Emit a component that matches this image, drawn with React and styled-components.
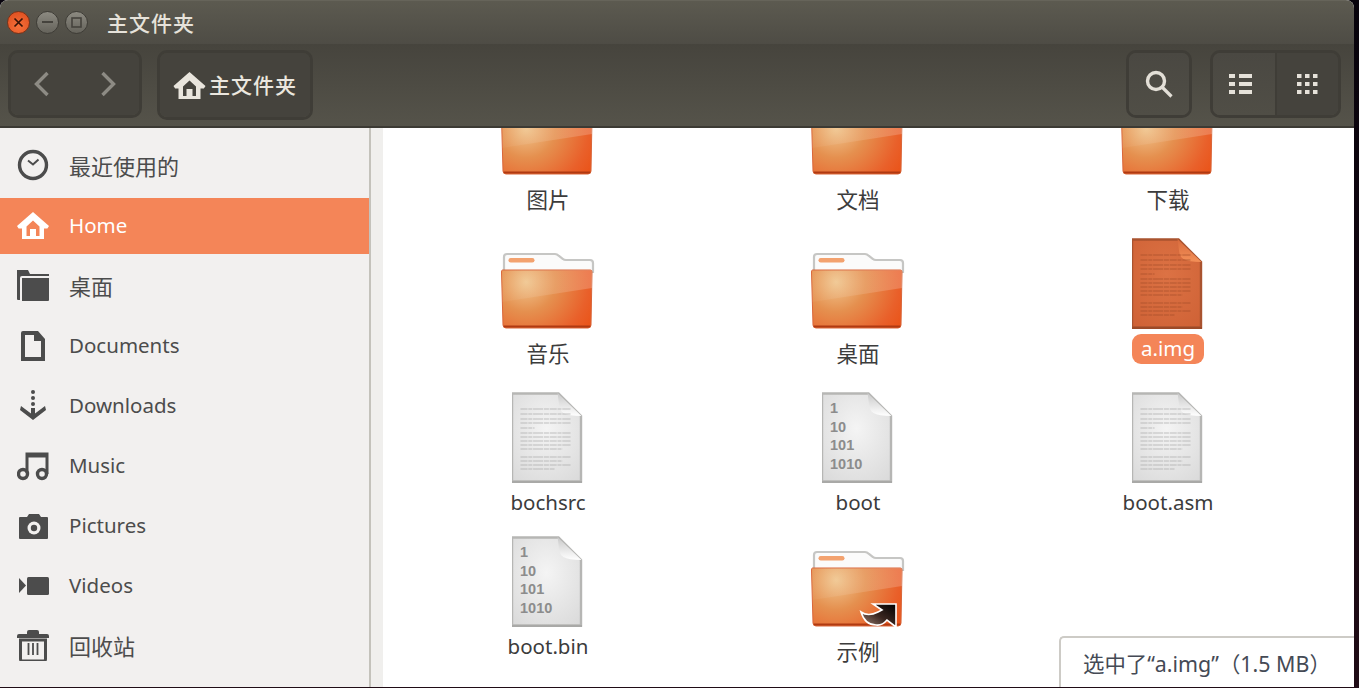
import React from 'react';
import styled, { createGlobalStyle } from 'styled-components';

const GlobalStyle = createGlobalStyle`
  html, body {
    margin: 0;
    padding: 0;
    height: 100%;
    overflow: hidden;
    background: #14060f;
    font-family: "Noto Sans", "Noto Sans CJK SC", sans-serif;
  }
`;

const Screen = styled.div`
  width: 1359px;
  height: 688px;
  background: linear-gradient(180deg, #07030c 0%, #200c16 100%);
  padding: 0 5px 1px 0;
  box-sizing: border-box;
`;

const Window = styled.div`
  height: 100%;
  display: flex;
  flex-direction: column;
  border-radius: 8px 8px 0 0;
  overflow: hidden;
  background: #fff;
`;

const TitleBar = styled.header`
  height: 44px;
  flex: none;
  display: flex;
  align-items: center;
  padding-left: 7px;
  box-sizing: border-box;
  background: linear-gradient(180deg, #5c5a50 0%, #4e4c45 100%);
  border-top: 1px solid #66645a;
`;

const WinButton = styled.div`
  width: 23px;
  height: 23px;
  margin-right: 6px;
  border-radius: 50%;
  display: flex;
  align-items: center;
  justify-content: center;
  box-sizing: border-box;
  border: 1px solid ${p => (p.$close ? '#7a3218' : '#3e3c36')};
  background: ${p =>
    p.$close
      ? 'radial-gradient(circle at 50% 70%, #f7703a, #dc4b1c)'
      : 'linear-gradient(180deg, #8c8a81, #65635b)'};
`;

const WindowTitle = styled.div`
  margin: -1px 0 0 13px;
  font-size: 21px;
  font-weight: 500;
  letter-spacing: 1px;
  color: #e6e2da;
`;

const ToolBar = styled.div`
  height: 84px;
  flex: none;
  display: flex;
  align-items: flex-start;
  padding: 6px 13px 0 8px;
  box-sizing: border-box;
  background: linear-gradient(180deg, #46443d 0%, #55534a 100%);
  border-bottom: 2px solid #3c3a34;
`;

const ToolGroup = styled.div`
  display: flex;
  height: ${p => p.$h || 68}px;
  box-sizing: border-box;
  margin-left: ${p => p.$ml || 0}px;
  border: 3px solid #3f3d37;
  border-radius: 10px;
  overflow: hidden;
`;

const ToolButton = styled.div`
  width: ${p => p.$w}px;
  height: 100%;
  display: flex;
  align-items: center;
  justify-content: center;
  gap: 3px;
  padding-right: ${p => p.$pr || 0}px;
  box-sizing: border-box;
  background: ${p => (p.$dark ? '#45433d' : 'linear-gradient(180deg, #4a4842, #504e46)')};
  border-left: ${p => (p.$divider ? '2px solid #3f3d37' : 'none')};
`;

const Spacer = styled.div`
  flex: 1;
`;

const PathLabel = styled.span`
  margin-top: -2px;
  font-size: 21px;
  font-weight: 500;
  letter-spacing: 1px;
  color: #ebe7df;
`;

const Body = styled.div`
  flex: 1;
  min-height: 0;
  display: flex;
`;

const Sidebar = styled.nav`
  width: 369px;
  flex: none;
  padding-top: 8px;
  box-sizing: border-box;
  background: #f2f0ef;
`;

const SideRow = styled.div`
  height: 60px;
  display: flex;
  align-items: center;
  padding: 0 0 2px 17px;
  box-sizing: border-box;
  font-size: ${p => (p.$cjk ? 22 : 20.5)}px;
  color: ${p => (p.$active ? '#ffffff' : '#4c4c4c')};
  border-top: 2px solid transparent;
  border-bottom: 2px solid transparent;
  background-clip: padding-box;
  background-color: ${p => (p.$active ? '#f48558' : 'transparent')};
`;

const SideIcon = styled.svg`
  width: 32px;
  height: 32px;
  margin-right: 20px;
  flex: none;
`;

const Gutter = styled.div`
  width: 14px;
  flex: none;
  box-sizing: border-box;
  background: #f0efed;
  border-left: 2px solid #c4c2bb;
`;

const Content = styled.main`
  flex: 1;
  min-width: 0;
  position: relative;
  overflow: hidden;
  background: #fff;
`;

const IconGrid = styled.div`
  display: grid;
  grid-template-columns: repeat(3, 310px);
  grid-auto-rows: min-content;
  margin: -44px 0 0 10px;
`;

const Cell = styled.div`
  height: ${p => p.$h}px;
  display: flex;
  flex-direction: column;
  align-items: center;
`;

const FileLabel = styled.div`
  margin-top: ${p => p.$mt}px;
  height: 30px;
  line-height: 29px;
  padding: 0 9px;
  font-size: ${p => (p.$cjk ? 21.5 : 20.5)}px;
  border-radius: 9px;
  color: ${p => (p.$selected ? '#fff' : '#3c3c3c')};
  background: ${p => (p.$selected ? '#f48558' : 'transparent')};
`;

const StatusBubble = styled.div`
  position: absolute;
  right: 0;
  bottom: 0;
  width: 295px;
  height: 51px;
  box-sizing: border-box;
  padding-left: 22px;
  display: flex;
  align-items: center;
  background: #fff;
  border: 2px solid #cdcbc6;
  border-width: 2px 0 0 2px;
  border-radius: 5px 0 0 0;
  font-size: 21.4px;
  text-spacing-trim: space-all;
  color: #454a55;
  white-space: nowrap;
`;

const FolderIcon = ({ link }) => (
  <svg width="95" height="96" viewBox="1 0 95 96">
    <defs>
      <radialGradient id="folderFill" gradientUnits="userSpaceOnUse" cx="26" cy="44" r="78">
        <stop offset="0" stopColor="#f0c68f" />
        <stop offset="0.38" stopColor="#e5904f" />
        <stop offset="0.8" stopColor="#e9602a" />
        <stop offset="1" stopColor="#ea5318" />
      </radialGradient>
      <linearGradient id="folderGloss" x1="0" y1="0" x2="1" y2="0">
        <stop offset="0" stopColor="#fff" stopOpacity="0.03" />
        <stop offset="1" stopColor="#fff" stopOpacity="0.2" />
      </linearGradient>
      <linearGradient id="arrowFill" x1="0" y1="1" x2="1" y2="0">
        <stop offset="0" stopColor="#a08578" />
        <stop offset="0.5" stopColor="#3a2620" />
        <stop offset="1" stopColor="#000" />
      </linearGradient>
    </defs>
    <path d="M4 34V19q0-3 3-3h48q2 0 4 2l4 3q1 1 3 1h24q3 0 3 3v9z" fill="#fbfbfb" stroke="#c6c6c4" strokeWidth="2.2" />
    <rect x="8.5" y="20" width="26" height="4.5" rx="2.2" fill="#f3a26f" />
    <path d="M2.5 32h88q1.5 0 1.5 2l-1 53q0 3-3 3H6q-3 0-3-3L1.5 34q0-2 1-2z" fill="url(#folderFill)" stroke="#d9663a" strokeWidth="1" />
    <path d="M2 64L92 50V34q0-2-1.5-2H2.5q-1 0-1 2z" fill="url(#folderGloss)" />
    <path d="M3.5 87.500q0 2 3 2h81q3 0 3-2z" fill="#b03a12" />
    {link && (
      <path
        d="M63 68H86V91L77 84Q72 90 66 89Q55 89 51 76Q58 81 68 76L72 74Z"
        fill="url(#arrowFill)"
        stroke="#fff"
        strokeWidth="1.6"
      />
    )}
  </svg>
);

// y offset of each tiny text line on a document icon
const textRows = [
  [17, 50], [22, 50], [27, 50], [31, 50], [36, 14],
  [41, 50], [45, 50], [49, 50], [53, 50], [57, 42],
  [65, 50], [69, 42], [73, 50], [77, 34],
];

const PageIcon = ({ tint, binary }) => {
  const edge = tint ? '#a9532f' : '#b6b6b4';
  const line = tint ? '#a64f2a' : '#a9a9a9';
  const id = tint ? 'pageTint' : 'pagePlain';
  return (
    <svg width="72" height="92" viewBox="1.5 0 72 92">
      <defs>
        <radialGradient id={id} cx="0.5" cy="0.4" r="0.75">
          <stop offset="0" stopColor={tint ? '#dc7244' : '#f4f4f4'} />
          <stop offset="1" stopColor={tint ? '#cf6236' : '#dadada'} />
        </radialGradient>
        <linearGradient id={`${id}Fold`} x1="0" y1="0" x2="0" y2="1">
          <stop offset="0" stopColor={tint ? '#d86a3c' : '#c9c9c9'} />
          <stop offset="1" stopColor={tint ? '#f39058' : '#ffffff'} />
        </linearGradient>
      </defs>
      <path d="M1.5 1.5H48L70.5 24V89.5H1.5z" fill={`url(#${id})`} stroke={edge} strokeWidth="2.4" />
      <path d="M47 1c2 12 1 17 6 20q5 3 18 3z" fill={`url(#${id}Fold)`} />
      <rect x="0.5" y="89" width="71" height="2" fill={tint ? '#9c4a28' : '#a9a9a7'} />
      {!binary && textRows.map(([y, w]) => (
        <path key={y} d={`M10 ${y}h${w}`} stroke={line} strokeWidth="1.2" strokeDasharray="7 0.8 4 0.8 10 0.8 5 0.8" opacity="0.7" />
      ))}
      {binary &&
        ['1', '10', '101', '1010'].map((t, i) => (
          <text key={t} x="9.5" y={21 + i * 18.5} fontFamily="Liberation Sans" fontSize="14.5" fontWeight="700" fill="#8c8c8c">
            {t}
          </text>
        ))}
    </svg>
  );
};

const items = [
  { name: '图片', kind: 'folder' },
  { name: '文档', kind: 'folder' },
  { name: '下载', kind: 'folder' },
  { name: '音乐', kind: 'folder' },
  { name: '桌面', kind: 'folder' },
  { name: 'a.img', kind: 'page', selected: true },
  { name: 'bochsrc', kind: 'page' },
  { name: 'boot', kind: 'binary' },
  { name: 'boot.asm', kind: 'page' },
  { name: 'boot.bin', kind: 'binary' },
  { name: '示例', kind: 'link' },
];

const isCjk = text => /[\u4e00-\u9fff]/.test(text);

const HomeShape = ({ color, hole }) => (
  <g>
    <path d="M16 3L0 17l1.6 2.5H5V30h22V19.5h3.4L32 17z" fill={color} />
    <path d="M9.5 17.5L16 11.5l6.5 6V27h-3.5v-7h-6v7H9.5z" fill={hole} />
  </g>
);

const sideItems = [
  {
    label: '最近使用的',
    icon: (
      <g fill="none" stroke="#4c4c4c">
        <circle cx="16" cy="16" r="13.5" strokeWidth="3.4" />
        <path d="M11 11.5l5 4 5.5-5" strokeWidth="2" />
      </g>
    ),
  },
  { label: 'Home', active: true, icon: <HomeShape color="#fff" hole="#f48558" /> },
  {
    label: '桌面',
    icon: (
      <g fill="#4c4c4c">
        <path d="M0 1h11l2 4h19v2H5q-2 0-2 2v22H1q-1 0-1-1z" />
        <path d="M5 9h27v22q0 1-1 1H5z" />
      </g>
    ),
  },
  {
    label: 'Documents',
    icon: <path d="M6 2h15l7 8v22H4V4q0-2 2-2zM8 6v22h16V12h-7V6z" fill="#4c4c4c" fillRule="evenodd" />,
  },
  {
    label: 'Downloads',
    icon: (
      <g fill="#4c4c4c">
        <circle cx="16" cy="3" r="2" />
        <circle cx="16" cy="9" r="2" />
        <circle cx="16" cy="15" r="2" />
        <path d="M4 17l12 9 12-9 1 4-13 10L3 21z" />
        <rect x="14" y="19" width="4" height="7" />
      </g>
    ),
  },
  {
    label: 'Music',
    icon: (
      <g fill="none" stroke="#4c4c4c">
        <circle cx="6" cy="25" r="4.5" strokeWidth="3.4" />
        <circle cx="25" cy="25" r="4.5" strokeWidth="3.4" />
        <path d="M10 24V5h20v20" strokeWidth="3" />
        <path d="M10 7h20" strokeWidth="3" />
      </g>
    ),
  },
  {
    label: 'Pictures',
    icon: (
      <g>
        <path d="M3 8h7l2-3h10l2 3h6q1 0 1 1v20q0 1-1 1H3q-1 0-1-1V9q0-1 1-1z" fill="#4c4c4c" />
        <circle cx="17" cy="19" r="6.5" fill="#f2f0ef" />
        <circle cx="17" cy="19" r="3.2" fill="#4c4c4c" />
      </g>
    ),
  },
  {
    label: 'Videos',
    icon: (
      <g fill="#4c4c4c">
        <path d="M2 9l7 7.5-7 7.5z" />
        <rect x="10" y="8" width="22" height="18" rx="1.5" />
      </g>
    ),
  },
  {
    label: '回收站',
    icon: (
      <g>
        <path d="M0 7q0-2 2-2h8V3q0-2 2-2h8q2 0 2 2v2h8q2 0 2 2v2H0z" fill="#4c4c4c" />
        <path d="M3.5 11h25v19q0 2-2 2h-21q-2 0-2-2z" fill="none" stroke="#4c4c4c" strokeWidth="3" />
        <path d="M11.5 14v12M16 14v12M20.5 14v12" stroke="#4c4c4c" strokeWidth="1.8" />
      </g>
    ),
  },
];

export default function App() {
  return (
    <Screen>
      <GlobalStyle />
      <Window>
        <TitleBar>
          <WinButton $close>
            <svg width="11" height="11" viewBox="0 0 11 11">
              <path d="M1.5 1.5l8 8M9.5 1.5l-8 8" stroke="#3a1408" strokeWidth="1.7" />
            </svg>
          </WinButton>
          <WinButton>
            <svg width="11" height="3" viewBox="0 0 11 3">
              <rect width="11" height="2" fill="#45433d" />
            </svg>
          </WinButton>
          <WinButton>
            <svg width="11" height="11" viewBox="0 0 11 11">
              <rect x="1" y="1" width="9" height="9" fill="none" stroke="#45433d" strokeWidth="1.6" />
            </svg>
          </WinButton>
          <WindowTitle>主文件夹</WindowTitle>
        </TitleBar>

        <ToolBar>
          <ToolGroup>
            <ToolButton $w={64} $dark>
              <svg width="18" height="26" viewBox="0 0 18 26">
                <path d="M13.5 2L2.5 13l11 11" fill="none" stroke="#8d8b84" strokeWidth="3.4" />
              </svg>
            </ToolButton>
            <ToolButton $w={64} $dark>
              <svg width="18" height="26" viewBox="0 0 18 26">
                <path d="M4.5 2l11 11-11 11" fill="none" stroke="#8d8b84" strokeWidth="3.4" />
              </svg>
            </ToolButton>
          </ToolGroup>
          <ToolGroup $ml={15} $h={70}>
            <ToolButton $w={150} $dark>
              <svg width="33" height="32" viewBox="0 0 32 32">
                <HomeShape color="#e9e5dd" hole="#45433d" />
              </svg>
              <PathLabel>主文件夹</PathLabel>
            </ToolButton>
          </ToolGroup>
          <Spacer />
          <ToolGroup>
            <ToolButton $w={60}>
              <svg width="30" height="30" viewBox="0 0 30 30">
                <circle cx="12" cy="12" r="8.5" fill="none" stroke="#e3dfd7" strokeWidth="3.4" />
                <path d="M18 18l9.5 9.5" stroke="#e3dfd7" strokeWidth="3.2" />
              </svg>
            </ToolButton>
          </ToolGroup>
          <ToolGroup $ml={18}>
            <ToolButton $w={62} $pr={7}>
              <svg width="23" height="20" viewBox="0 0 23 20" fill="#e6e2da">
                <rect y="0" width="6" height="4" />
                <rect x="10" y="0" width="13" height="4" />
                <rect y="8" width="6" height="4" />
                <rect x="10" y="8" width="13" height="4" />
                <rect y="16" width="6" height="4" />
                <rect x="10" y="16" width="13" height="4" />
              </svg>
            </ToolButton>
            <ToolButton $w={63} $dark $divider>
              <svg width="21" height="20" viewBox="0 0 21 20" fill="#e6e2da">
                {[0, 8, 16].flatMap(y =>
                  [0, 8, 16].map(x => <rect key={`${x}-${y}`} x={x} y={y} width="4.5" height="4" />)
                )}
              </svg>
            </ToolButton>
          </ToolGroup>
        </ToolBar>

        <Body>
          <Sidebar>
            {sideItems.map(item => (
              <SideRow key={item.label} $active={item.active} $cjk={isCjk(item.label)}>
                <SideIcon viewBox="0 0 32 32">{item.icon}</SideIcon>
                {item.label}
              </SideRow>
            ))}
          </Sidebar>
          <Gutter />
          <Content>
            <IconGrid>
              {items.map(item => {
                const isFolder = item.kind === 'folder' || item.kind === 'link';
                return (
                  <Cell key={item.name} $h={isFolder || item.selected ? 154 : 144}>
                    {isFolder ? (
                      <FolderIcon link={item.kind === 'link'} />
                    ) : (
                      <PageIcon tint={item.selected} binary={item.kind === 'binary'} />
                    )}
                    <FileLabel $mt={isFolder ? 5 : 4} $selected={item.selected} $cjk={isCjk(item.name)}>
                      {item.name}
                    </FileLabel>
                  </Cell>
                );
              })}
            </IconGrid>
            <StatusBubble>选中了“a.img”（1.5 MB）</StatusBubble>
          </Content>
        </Body>
      </Window>
    </Screen>
  );
}
